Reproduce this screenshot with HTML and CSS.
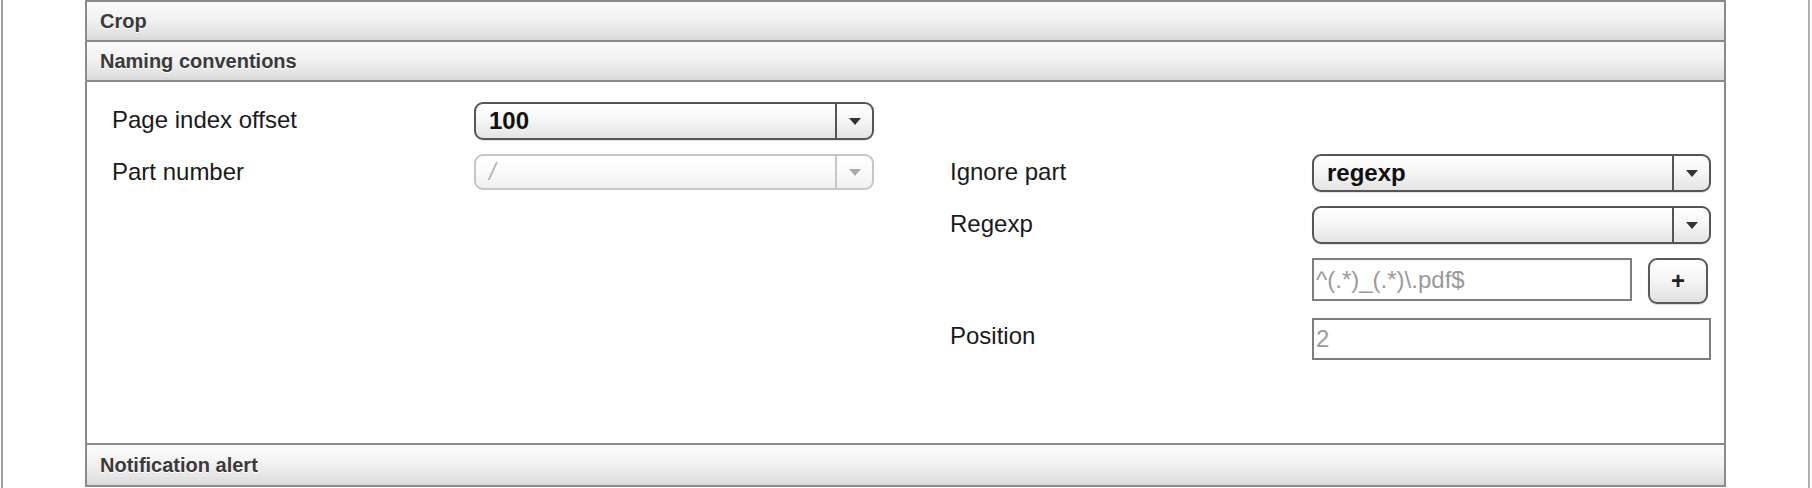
FILE: index.html
```html
<!DOCTYPE html>
<html lang="en">
<head>
<meta charset="utf-8">
<title>Naming conventions</title>
<link rel="stylesheet" href="styles.css">
</head>
<body>
<div class="page">
  <div class="panel">
    <div class="section-head">Crop</div>
    <div class="section-head">Naming conventions</div>
    <div class="section-body">
      <div class="form-grid">
        <div class="label c1">Page index offset</div>
        <div class="select c2"><span class="value">100</span><span class="arrow"><span class="tri"></span></span></div>

        <div class="label c1">Part number</div>
        <div class="select disabled c2"><span class="value">/</span><span class="arrow"><span class="tri"></span></span></div>
        <div class="label c4">Ignore part</div>
        <div class="select c5"><span class="value">regexp</span><span class="arrow"><span class="tri"></span></span></div>

        <div class="label c4">Regexp</div>
        <div class="select c5"><span class="value"></span><span class="arrow"><span class="tri"></span></span></div>

        <div class="label c4"></div>
        <div class="add-row c5">
          <div class="text-input wide">^(.*)_(.*)\.pdf$</div>
          <div class="button">+</div>
        </div>

        <div class="label c4">Position</div>
        <div class="text-input pos c5">2</div>
      </div>
    </div>
    <div class="section-head tall">Notification alert</div>
  </div>
</div>
</body>
</html>
```

FILE: styles.css
```css
html, body {
  margin: 0;
  padding: 0;
  background: #ffffff;
}

body {
  font-family: "Liberation Sans", Arial, Helvetica, sans-serif;
  color: #222222;
}

.page {
  box-sizing: border-box;
  height: 488px;
  margin: 0 2px 0 1px;
  padding: 0 82px;
  border-left: 2px solid #a0a0a0;
  border-right: 2px solid #b0b0b0;
  overflow: hidden;
}

.panel {
  border-left: 2px solid #8a8a8a;
  border-right: 2px solid #8a8a8a;
  border-top: 2px solid #8a8a8a;
}

.section-head {
  height: 38px;
  line-height: 38px;
  padding-left: 13px;
  border-bottom: 2px solid #8a8a8a;
  background: linear-gradient(#fbfbfb 0%, #f2f2f2 45%, #e2e2e2 85%, #d8d8d8 100%);
  font-size: 20px;
  font-weight: bold;
  color: #3a3a3a;
  text-shadow: 0 1px 0 #ffffff;
}

.section-head.tall {
  height: 40px;
  line-height: 40px;
}

.section-body {
  box-sizing: border-box;
  height: 363px;
  padding: 20px 0 0 25px;
  border-bottom: 2px solid #8a8a8a;
}

.form-grid {
  display: grid;
  grid-template-columns: 362px 400px 76px 362px 399px;
  row-gap: 14px;
  align-items: start;
}

.c1 { grid-column: 1; }
.c2 { grid-column: 2; }
.c4 { grid-column: 4; }
.c5 { grid-column: 5; }

.label {
  font-size: 24px;
  line-height: 36px;
  color: #1a1a1a;
}

.select {
  box-sizing: border-box;
  height: 38px;
  display: flex;
  align-items: stretch;
  border: 2px solid #555555;
  border-radius: 9px;
  background: linear-gradient(#ffffff 0%, #f6f6f6 45%, #e4e4e4 100%);
  box-shadow: 0 1px 1px rgba(0, 0, 0, 0.12);
  overflow: hidden;
}

.select .value {
  flex: 1;
  display: flex;
  align-items: center;
  padding-left: 13px;
  font-size: 24px;
  font-weight: bold;
  color: #111111;
}

.select .arrow {
  width: 35px;
  border-left: 2px solid #555555;
  display: flex;
  align-items: center;
  justify-content: center;
}

.select .tri {
  width: 0;
  height: 0;
  border-left: 6px solid transparent;
  border-right: 6px solid transparent;
  border-top: 7px solid #333333;
}

.select.disabled {
  height: 36px;
  border-color: #c6c6c6;
  background: linear-gradient(#ffffff 0%, #fafafa 50%, #f0f0f0 100%);
  box-shadow: none;
}

.select.disabled .value {
  font-weight: normal;
  font-style: italic;
  color: #b4b4b4;
}

.select.disabled .arrow {
  border-left-color: #c6c6c6;
}

.select.disabled .tri {
  border-top-color: #aaaaaa;
}

.add-row {
  display: flex;
  gap: 16px;
  align-items: flex-start;
}

.text-input {
  box-sizing: border-box;
  border: 2px solid #7e7e7e;
  background: #ffffff;
  font-size: 24px;
  color: #9a9a9a;
  padding-left: 2px;
  display: flex;
  align-items: center;
}

.text-input.wide {
  width: 320px;
  height: 43px;
}

.text-input.pos {
  height: 42px;
}

.button {
  box-sizing: border-box;
  width: 60px;
  height: 46px;
  border: 2px solid #5a5a5a;
  border-radius: 9px;
  background: linear-gradient(#ffffff 0%, #f4f4f4 50%, #e0e0e0 100%);
  box-shadow: 0 1px 1px rgba(0, 0, 0, 0.15);
  display: flex;
  align-items: center;
  justify-content: center;
  font-size: 24px;
  font-weight: bold;
  color: #222222;
}
```
